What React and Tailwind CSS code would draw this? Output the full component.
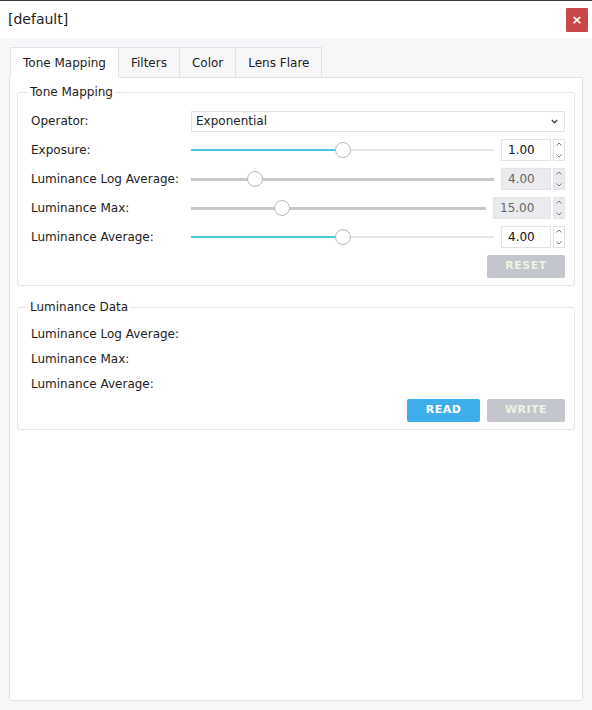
import { useState } from 'react';

const tabs = ['Tone Mapping', 'Filters', 'Color', 'Lens Flare'];

function Spinner({ disabled }) {
  return (
    <div className={`flex w-[12px] flex-col items-center justify-between border border-[#e3e3e6] py-[2px] ${disabled ? 'bg-[#e9ebef]' : 'bg-white'}`}>
      <svg width="6" height="4" viewBox="0 0 6 4"><path d="M0.5 3.5 L3 1 L5.5 3.5" fill="none" stroke="#777" strokeWidth="1" /></svg>
      <svg width="6" height="4" viewBox="0 0 6 4"><path d="M0.5 0.5 L3 3 L5.5 0.5" fill="none" stroke="#777" strokeWidth="1" /></svg>
    </div>
  );
}

function NumberBox({ value, disabled, wide }) {
  return (
    <div className={`flex h-[22px] shrink-0 gap-[2px] ${wide ? 'w-[72px]' : 'w-[64px]'}`}>
      <div className={`flex flex-1 items-center border border-[#e3e3e6] px-[6px] ${disabled ? 'bg-[#e9ebef] text-[#666]' : 'bg-white text-[#111]'}`}>
        {value}
      </div>
      <Spinner disabled={disabled} />
    </div>
  );
}

function Slider({ pct, disabled }) {
  return (
    <div className="relative flex h-[22px] flex-1 items-center">
      {disabled ? (
        <div className="h-[3px] w-full bg-[#c8c8cc]" />
      ) : (
        <div className="flex h-[2px] w-full">
          <div className="h-full bg-[#4dc9dc]" style={{ width: `${pct}%` }} />
          <div className="h-full flex-1 bg-[#e6e6e8]" />
        </div>
      )}
      <div
        className="absolute top-[3px] h-[16px] w-[16px] -translate-x-1/2 rounded-full border border-[#b9b9bd] bg-white"
        style={{ left: `${pct}%` }}
      />
    </div>
  );
}

function SliderRow({ label, pct, value, disabled, wide }) {
  return (
    <div className="flex h-[22px] items-center">
      <div className="w-[160px] shrink-0">{label}</div>
      <div className="flex flex-1 items-center gap-[7px]">
        <Slider pct={pct} disabled={disabled} />
        <NumberBox value={value} disabled={disabled} wide={wide} />
      </div>
    </div>
  );
}

function Btn({ children, primary }) {
  return (
    <button
      className={`h-[23px] rounded-[2px] text-[11px] font-bold tracking-[0.5px] ${
        primary ? 'w-[73px] bg-[#3daee9] text-white' : 'w-[78px] bg-[#c3c6cc] text-[#eef3e4]'
      }`}
    >
      {children}
    </button>
  );
}

export default function App() {
  const [active, setActive] = useState(0);

  return (
    <div className="flex h-[710px] w-[592px] flex-col border-t border-[#3a3a3a] bg-[#f7f7f9] font-['DejaVu_Sans',sans-serif] text-[12px] text-[#222]">
      <header className="flex h-[37px] shrink-0 items-center justify-between bg-white pl-[8px] pr-[4px]">
        <span className="text-[14px] text-[#222]">[default]</span>
        <button className="flex h-[24px] w-[22px] items-center justify-center rounded-[1px] bg-[#c9474b] text-[13px] font-bold text-white">
          ×
        </button>
      </header>

      <div className="flex flex-1 flex-col px-[9px] pb-[9px] pt-[9px]">
        <div className="flex h-[30px] shrink-0">
          {tabs.map((t, i) => (
            <button
              key={t}
              onClick={() => setActive(i)}
              className={`-ml-px flex h-[31px] items-center border border-[#e2e2e6] px-[12px] first:ml-px ${
                i === active ? 'z-10 border-b-white bg-white' : 'bg-[#f7f7f9]'
              }`}
            >
              {t}
            </button>
          ))}
        </div>

        <div className="flex flex-1 flex-col gap-[14px] rounded-b-[3px] border border-[#e2e2e6] bg-white px-[7px] pt-[7px]">
          <fieldset className="rounded-[3px] border border-[#e6e6ea] pb-[7px] pl-[13px] pr-[9px] pt-[10px]">
            <legend className="-ml-[3px] px-[2px] leading-[15px]">Tone Mapping</legend>
            <div className="flex flex-col gap-[7px]">
              <div className="flex h-[22px] items-center">
                <div className="w-[160px] shrink-0">Operator:</div>
                <div className="flex h-[21px] flex-1 items-center justify-between border border-[#e3e3e6] pl-[4px] pr-[6px]">
                  <span>Exponential</span>
                  <svg width="7" height="5" viewBox="0 0 7 5"><path d="M0.8 1 L3.5 3.8 L6.2 1" fill="none" stroke="#444" strokeWidth="1.3" /></svg>
                </div>
              </div>
              <SliderRow label="Exposure:" pct={50} value="1.00" />
              <SliderRow label="Luminance Log Average:" pct={21} value="4.00" disabled />
              <SliderRow label="Luminance Max:" pct={31} value="15.00" disabled wide />
              <SliderRow label="Luminance Average:" pct={50} value="4.00" />
              <div className="flex justify-end">
                <Btn>RESET</Btn>
              </div>
            </div>
          </fieldset>

          <fieldset className="rounded-[3px] border border-[#e6e6ea] pb-[7px] pl-[13px] pr-[9px] pt-[6px]">
            <legend className="-ml-[3px] px-[2px] leading-[15px]">Luminance Data</legend>
            <div className="flex flex-col">
              <div className="flex h-[25px] items-center">Luminance Log Average:</div>
              <div className="flex h-[25px] items-center">Luminance Max:</div>
              <div className="flex h-[25px] items-center">Luminance Average:</div>
              <div className="mt-[3px] flex justify-end gap-[7px]">
                <Btn primary>READ</Btn>
                <Btn>WRITE</Btn>
              </div>
            </div>
          </fieldset>
        </div>
      </div>
    </div>
  );
}
